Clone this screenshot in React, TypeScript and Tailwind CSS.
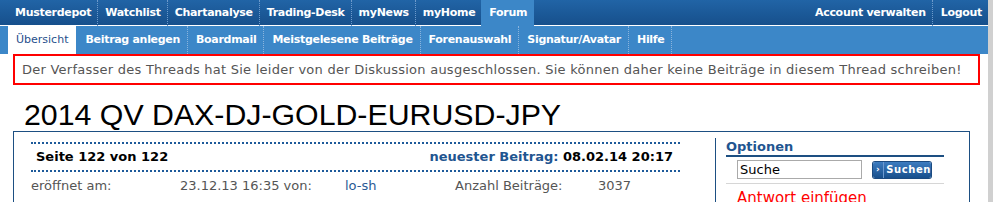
const topItems = ['Musterdepot', 'Watchlist', 'Chartanalyse', 'Trading-Desk', 'myNews', 'myHome']
const subItems = ['Beitrag anlegen', 'Boardmail', 'Meistgelesene Beiträge', 'Forenauswahl', 'Signatur/Avatar', 'Hilfe']

const verdana = "font-['DejaVu_Sans',Verdana,sans-serif]"

export default function App() {
  return (
    <div className={`flex w-[993px] min-h-[202px] ${verdana}`}>
      <div className="w-[988px] bg-white overflow-hidden">
        {/* Main nav */}
        <div className="flex h-[26px] bg-gradient-to-b from-[#2164a6] to-[#164f8b] shadow-[inset_0_-1px_0_#ffffff] text-[11px] tracking-[-0.3px] font-bold text-white pl-[8px]">
          {topItems.map((item, i) => (
            <div
              key={item}
              className={`flex items-center pl-[7px] pr-[6px] ${i > 0 ? 'border-l border-dotted border-[#6d9acb]' : ''}`}
            >
              {item}
            </div>
          ))}
          <div className="flex items-center bg-[#3c87c8] pl-[8px] pr-[7px]">Forum</div>
          <div className="flex-1" />
          <div className="flex items-center pl-[7px] pr-[6px]">Account verwalten</div>
          <div className="flex items-center pl-[8px] pr-[6px] border-l border-dotted border-[#6d9acb]">Logout</div>
        </div>

        {/* Sub nav */}
        <div className="flex h-[28px] bg-[#3c87c8] text-[11px] tracking-[-0.3px] font-bold text-white pl-[8px]">
          <div className="flex items-center bg-white px-[8px] font-normal tracking-normal text-[#1f4f8c]">Übersicht</div>
          {subItems.map((item, i) => (
            <div
              key={item}
              className={`flex items-center pr-[7px] ${i > 0 ? 'pl-[8px] border-l border-dotted border-[#8ab4dd]' : 'pl-[9px]'}`}
            >
              {item}
            </div>
          ))}
          <div className="border-l border-dotted border-[#8ab4dd]" />
        </div>

        {/* Notice */}
        <div className="ml-[13px] w-[967px] h-[31px] border-2 border-[#ff0000] flex items-center pl-[7px] text-[13px] tracking-[0.25px] text-[#555555]">
          Der Verfasser des Threads hat Sie leider von der Diskussion ausgeschlossen. Sie können daher keine Beiträge in diesem Thread schreiben!
        </div>

        <h1 className="mt-[15px] ml-[24px] h-[31px] text-[30.3px] leading-[30px] text-black font-['Liberation_Sans',Arial,sans-serif]">
          2014 QV DAX-DJ-GOLD-EURUSD-JPY
        </h1>

        {/* Thread box */}
        <div className="ml-[13px] w-[957px] h-[80px] border border-[#1d4f82] flex">
          <div className="w-[649px] ml-[17px] mt-[10px]">
            <div className="border-y-2 border-dotted border-[#1d5a9a] h-[30px] flex items-center justify-between pl-[5px] pr-[7px] text-[13px] font-bold">
              <span className="text-black">Seite 122 von 122</span>
              <span>
                <span className="text-[#1f5590]">neuester Beitrag: </span>
                <span className="text-black">08.02.14 20:17</span>
              </span>
            </div>
            <div className="flex h-[28px] items-center text-[13px] text-[#555555]">
              <span className="w-[149px]">eröffnet am:</span>
              <span className="w-[165px]">23.12.13 16:35 von:</span>
              <span className="w-[110px] text-[#2a5a95]">lo-sh</span>
              <span className="w-[143px]">Anzahl Beiträge:</span>
              <span>3037</span>
            </div>
          </div>
          <div className="ml-[35px] mt-[6px] border-l border-[#1d4f82] pl-[10px] w-[230px]">
            <div className="w-[218px] border-b-2 border-[#1d4f82] h-[19px] flex items-center text-[13px] font-bold text-[#1f5590]">
              Optionen
            </div>
            <div className="w-[218px] flex items-center h-[27px] border-b border-[#d6d6d6] pl-[11px] pb-[1px]">
              <div className="w-[125px] h-[19px] border border-[#aaaaaa] flex items-center pl-[2px] text-[13px] text-black">
                Suche
              </div>
              <button className="ml-[11px] h-[16px] w-[58px] flex items-stretch rounded-[2px] bg-gradient-to-b from-[#3d7cc0] to-[#174f8c] text-white text-[10px] font-bold tracking-[0.6px] shadow-[0_0_0_1px_#1b4a80]">
                <span className="w-[12px] flex items-center justify-center border-r border-[#6d9ad0] text-[9px]">›</span>
                <span className="flex items-center pl-[2px]">Suchen</span>
              </button>
            </div>
            <div className="pl-[11px] pt-[5px] text-[15px] text-[#ff0000] leading-[18px]">Antwort einfügen</div>
          </div>
        </div>
      </div>
      <div className="flex-1 bg-[#d0d0d0]" />
    </div>
  )
}
